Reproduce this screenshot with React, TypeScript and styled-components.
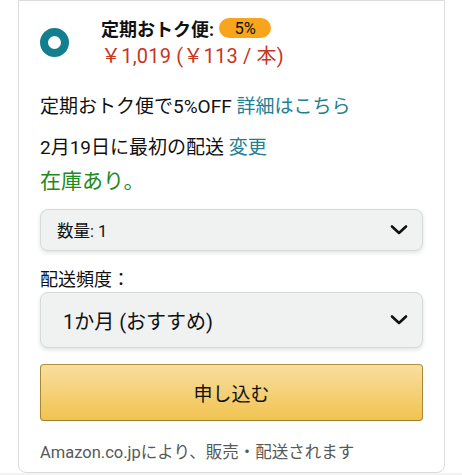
import styled, { createGlobalStyle } from "styled-components";

const GlobalStyle = createGlobalStyle`
  html, body {
    margin: 0;
    padding: 0;
    background: #fff;
  }
  body {
    font-family: Roboto, "Noto Sans CJK JP", "Noto Sans", sans-serif;
    color: #111;
  }
`;

function Chevron() {
  return (
    <svg width="18" height="12" viewBox="0 0 18 12" fill="none">
      <path
        d="M2 2.5 L9 9 L16 2.5"
        stroke="#111"
        strokeWidth="2.6"
        strokeLinecap="round"
        strokeLinejoin="round"
      />
    </svg>
  );
}

export default function App() {
  return (
    <>
      <GlobalStyle />
      <Page>
        <Card>
          <Header>
            <Radio />
            <HeaderText>
              <TitleRow>
                <Title>定期おトク便:</Title>
                <Badge>5%</Badge>
              </TitleRow>
              <Price>￥1,019 (￥113 / 本)</Price>
            </HeaderText>
          </Header>

          <Line $top={28}>
            定期おトク便で5%OFF <LinkText>詳細はこちら</LinkText>
          </Line>
          <Line $top={19}>
            2月19日に最初の配送 <LinkText>変更</LinkText>
          </Line>
          <Stock>在庫あり。</Stock>

          <Select $height={42} $size={16.5} $pad={16} $top={15}>
            <span>数量: 1</span>
            <Chevron />
          </Select>

          <Label>配送頻度：</Label>
          <Select $height={56} $size={20} $pad={22} $top={2}>
            <span>1か月 (おすすめ)</span>
            <Chevron />
          </Select>

          <SubmitButton>申し込む</SubmitButton>

          <Footer>Amazon.co.jpにより、販売・配送されます</Footer>
        </Card>
      </Page>
    </>
  );
}

const Page = styled.div`
  width: 462px;
  height: 475px;
  padding: 0 17px 2px 18px;
  box-sizing: border-box;
  background: linear-gradient(to bottom, #fff 473px, #f3f3f3 473px);
`;

const Card = styled.div`
  height: 473px;
  box-sizing: border-box;
  border: 1px solid #dcdcdc;
  border-radius: 0 0 8px 8px;
  padding: 16px 21px 0 21px;
  display: flex;
  flex-direction: column;
`;

const Header = styled.div`
  display: flex;
  align-items: center;
  gap: 32px;
`;

const Radio = styled.div`
  width: 29px;
  height: 29px;
  border-radius: 50%;
  background: #fff;
  border: 8.5px solid #137f8e;
  box-sizing: border-box;
  flex-shrink: 0;
`;

const HeaderText = styled.div`
  display: flex;
  flex-direction: column;
`;

const TitleRow = styled.div`
  display: flex;
  align-items: center;
  gap: 5px;
  height: 22px;
`;

const Title = styled.span`
  font-size: 18px;
  font-weight: 700;
  color: #111;
`;

const Badge = styled.span`
  display: inline-flex;
  align-items: center;
  justify-content: center;
  width: 52px;
  height: 20px;
  border-radius: 10px;
  background: #f8a51e;
  font-size: 16.5px;
  color: #111;
`;

const Price = styled.div`
  margin-top: 5px;
  font-size: 20px;
  line-height: 24px;
  color: #c7361f;
  letter-spacing: 0.2px;
`;

const Line = styled.div<{ $top: number }>`
  margin-top: ${(p) => p.$top}px;
  font-size: 19px;
  color: #111;
  line-height: 22px;
`;

const LinkText = styled.span`
  color: #217f92;
`;

const Stock = styled.div`
  margin-top: 9px;
  font-size: 21px;
  color: #1d8a1d;
  line-height: 26px;
`;

const Select = styled.div<{
  $height: number;
  $size: number;
  $pad: number;
  $top: number;
}>`
  height: ${(p) => p.$height}px;
  box-sizing: border-box;
  display: flex;
  align-items: center;
  justify-content: space-between;
  padding: 0 14px 0 ${(p) => p.$pad}px;
  background: #f0f2f2;
  border: 1px solid #d5d9d9;
  border-radius: 8px;
  box-shadow: 0 2px 4px rgba(15, 17, 17, 0.12);
  font-size: ${(p) => p.$size}px;
  color: #111;
  margin-top: ${(p) => p.$top}px;
`;

const Label = styled.div`
  margin-top: 19px;
  font-size: 18px;
  color: #111;
  line-height: 20px;
`;

const SubmitButton = styled.button`
  margin-top: 16px;
  height: 57px;
  width: 100%;
  border: 1px solid #a88734;
  border-color: #b49238 #a88734 #9c7e31;
  border-radius: 4px;
  background: linear-gradient(to bottom, #f8dea0, #f1c34f);
  font-family: Roboto, "Noto Sans CJK JP", sans-serif;
  font-size: 19px;
  color: #111;
  cursor: pointer;
`;

const Footer = styled.div`
  margin-top: 22px;
  font-size: 16.5px;
  color: #565959;
  line-height: 20px;
`;
